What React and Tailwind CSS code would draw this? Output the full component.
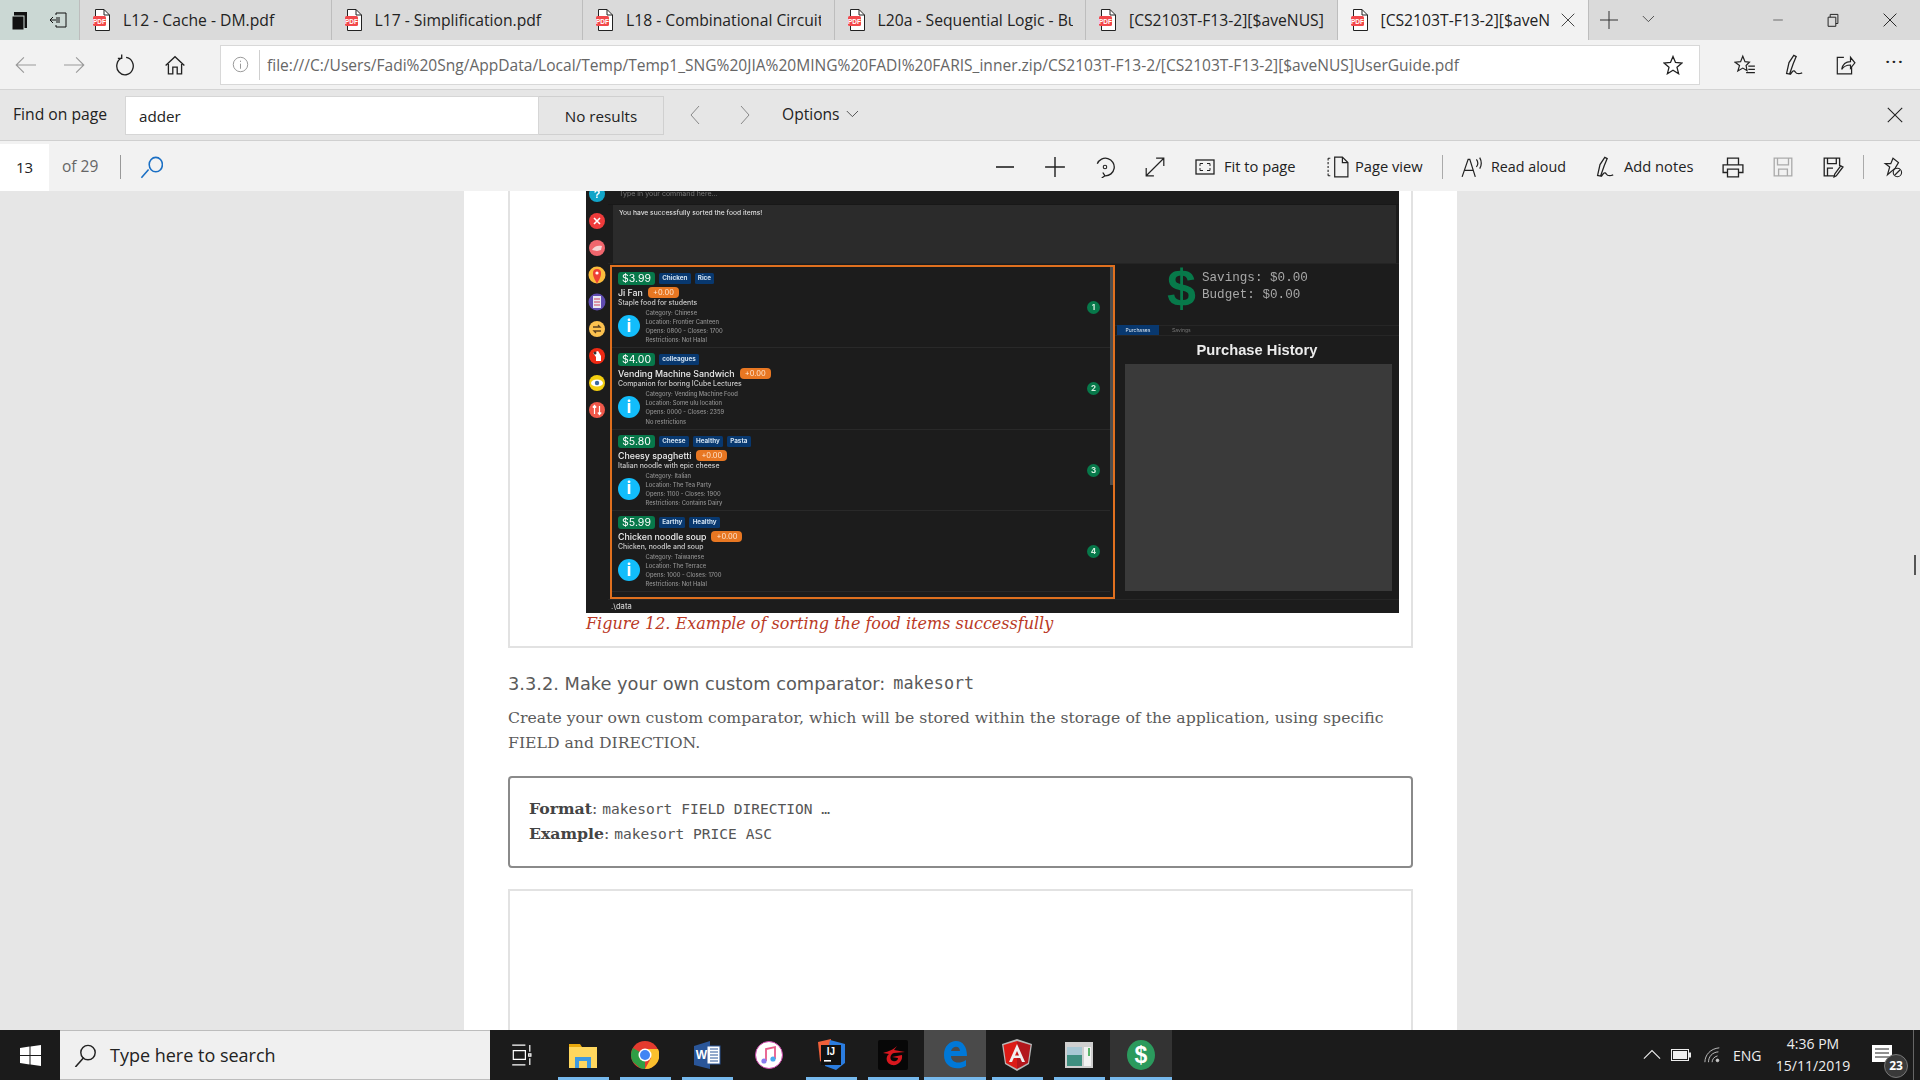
import React from "react";

const Ic = ({ s = 20, children, className = "", sw = 1 }) => (
  <svg width={s} height={s} viewBox="0 0 20 20" fill="none" stroke="currentColor" strokeWidth={sw} className={className}>{children}</svg>
);

const PdfIcon = () => (
  <svg width="18" height="22" viewBox="0 0 18 22" className="shrink-0">
    <path d="M2.5 .5H11L16.5 6V21.5H2.5Z" fill="#fff" stroke="#222" />
    <path d="M11 .5V6H16.5" fill="none" stroke="#222" />
    <rect x="0" y="7" width="13" height="10" rx="1.5" fill="#f2484b" />
    <text x="6.5" y="14.5" fontSize="6.5" fontWeight="700" fill="#fff" textAnchor="middle" fontFamily="Liberation Sans">PDF</text>
  </svg>
);

const Tab = ({ title, active }) => (
  <div className={`w-[251.5px] h-10 flex items-center pl-[13px] border-r border-[#bdbdbd] shrink-0 ${active ? "bg-[#f2f2f2]" : ""}`}>
    <PdfIcon />
    <div className={`ml-[12px] overflow-hidden whitespace-nowrap text-[15.7px] text-[#222] pt-[1px] ${active ? "w-[170px]" : "w-[195px]"}`}>{title}</div>
    {active && <Ic s={18} className="ml-[8px] text-[#333]"><path d="M3 3L17 17M17 3L3 17" /></Ic>}
  </div>
);

const Btn = ({ children, className = "" }) => (
  <div className={`w-[50px] h-full flex items-center justify-center shrink-0 ${className}`}>{children}</div>
);

const Pen = () => (
  <Ic s={24}><path d="M3 17L5 8 9 2 11 3 8.5 9 5.5 17.5ZM6 18C8 15 9 14 10 15.500S12 18 16 16.500" strokeWidth="1.05" /></Ic>
);

const SideIcons = () => (
  <div className="w-[22px] shrink-0 flex flex-col items-center gap-[11px] mt-[-5px]">
    <svg width="16" height="16" viewBox="0 0 16 16"><circle cx="8" cy="8" r="8" fill="#12a5c9" /><text x="8" y="12" fontSize="11" fontWeight="700" fill="#fff" textAnchor="middle" fontFamily="Liberation Sans">?</text></svg>
    <svg width="16" height="16" viewBox="0 0 16 16"><circle cx="8" cy="8" r="8" fill="#ee3b3b" /><path d="M5 5L11 11M11 5L5 11" stroke="#fff" strokeWidth="1.6" /></svg>
    <svg width="16" height="16" viewBox="0 0 16 16"><circle cx="8" cy="8" r="8" fill="#f0666d" /><path d="M3 10C5 6 9 5 13 6L12 10 8 11Z" fill="#f5d5d5" /></svg>
    <svg width="16" height="16" viewBox="0 0 16 16" className="overflow-visible"><circle cx="8" cy="8" r="8.500" fill="#fcbc3c" /><path d="M8 16.500C4 10 4 8 4 6a4 4 0 018 0c0 2 0 4-4 10.500Z" fill="#ee4035" /><circle cx="8" cy="6" r="1.6" fill="#fff" /></svg>
    <svg width="16" height="16" viewBox="0 0 16 16" className="overflow-visible"><circle cx="8" cy="8" r="8.500" fill="#5f4bb0" /><rect x="4" y="2" width="8" height="12" fill="#e8e8f4" /><path d="M5 5H11M5 8H11M5 11H11" stroke="#d0415a" /></svg>
    <svg width="16" height="16" viewBox="0 0 16 16"><circle cx="8" cy="8" r="8" fill="#fcc24f" /><path d="M4 6H11L9 4M12 10H5L7 12" stroke="#5a4020" strokeWidth="1.3" fill="none" /></svg>
    <svg width="16" height="16" viewBox="0 0 16 16"><circle cx="8" cy="8" r="8" fill="#ee2a14" /><path d="M4 5L9 3 12 8 12 13 7 13 7 9Z" fill="#fff" /><circle cx="6" cy="5" r="1.5" fill="#333" /></svg>
    <svg width="16" height="16" viewBox="0 0 16 16"><circle cx="8" cy="8" r="8" fill="#f4cf10" /><ellipse cx="8" cy="8" rx="6" ry="3.6" fill="#fff" /><circle cx="8" cy="8" r="2.2" fill="#3c6aa0" /></svg>
    <svg width="16" height="16" viewBox="0 0 16 16"><circle cx="8" cy="8" r="8" fill="#f0584a" /><path d="M5.5 3.500V12M3.800 5.500L5.500 3.500 7.200 5.500M10.500 12.500V4M8.800 10.500L10.500 12.500 12.200 10.500" stroke="#fff" strokeWidth="1.2" fill="none" /></svg>
  </div>
);

const Food = ({ price, tags, name, details, n }) => (
  <div className="h-[81.4px] border-b border-[#292929] pl-[6px] pr-[10px] pt-[5px] flex items-center justify-between">
    <div className="self-start">
      <div className="flex items-center gap-[4px] h-[13px]">
        <div className="w-[37px] h-[13px] rounded-[3px] bg-[#07784a] text-white text-[10.5px] leading-[13px] text-center">{price}</div>
        {tags.map((t) => (
          <div key={t} className="h-[11px] px-[3.2px] rounded-[1.5px] bg-[#08386f] text-[#cfe0f0] text-[6.3px] font-bold leading-[11px]">{t}</div>
        ))}
      </div>
      <div className="mt-[2px] h-[11px] flex items-center gap-[5px]">
        <span className="text-[#ececec] text-[8.8px] leading-[11px] font-medium">{name}</span>
        <span className="w-[31px] h-[11px] rounded-[4px] bg-[#e87722] text-[#ffe6d0] text-[7.5px] leading-[11px] text-center">+0.00</span>
      </div>
      <div className="h-[9px] text-[#c8c8c8] text-[6.9px] leading-[9px] whitespace-nowrap font-medium">{details[0]}</div>
      <div className="flex items-center mt-[1px]">
        <div className="w-[22px] h-[22px] rounded-full bg-[#12bdfb] flex items-center justify-center text-white text-[17px] leading-none font-bold">i</div>
        <div className="ml-[5.5px] text-[#8f8f8f] text-[5.8px] leading-[9.1px] whitespace-nowrap font-medium">
          {details.slice(1).map((d) => <div key={d}>{d}</div>)}
        </div>
      </div>
    </div>
    <div className="w-[13px] h-[13px] -mt-[4px] rounded-full bg-[#07784a] text-[#d8efe0] text-[8px] font-bold leading-[13px] text-center">{n}</div>
  </div>
);

const foods = [
  { price: "$3.99", tags: ["Chicken", "Rice"], name: "Ji Fan", n: 1, details: ["Staple food for students", "Category: Chinese", "Location: Frontier Canteen", "Opens: 0800 - Closes: 1700", "Restrictions: Not Halal"] },
  { price: "$4.00", tags: ["colleagues"], name: "Vending Machine Sandwich", n: 2, details: ["Companion for boring ICube Lectures", "Category: Vending Machine Food", "Location: Some ulu location", "Opens: 0000 - Closes: 2359", "No restrictions"] },
  { price: "$5.80", tags: ["Cheese", "Healthy", "Pasta"], name: "Cheesy spaghetti", n: 3, details: ["Italian noodle with epic cheese", "Category: Italian", "Location: The Tea Party", "Opens: 1100 - Closes: 1900", "Restrictions: Contains Dairy"] },
  { price: "$5.99", tags: ["Earthy", "Healthy"], name: "Chicken noodle soup", n: 4, details: ["Chicken, noodle and soup", "Category: Taiwanese", "Location: The Terrace", "Opens: 1000 - Closes: 1700", "Restrictions: Not Halal"] },
];

const AppShot = () => (
  <div className="ml-[76px] w-[813px] h-[422px] bg-[#1c1c1c] flex overflow-hidden blur-[0.35px] font-['Inter',sans-serif]">
    <SideIcons />
    <div className="flex-1 min-w-0 flex flex-col">
      <div className="h-[14px] pl-[11px] text-[#777] text-[7px] leading-[5px] border-b border-[#181818]">Type in your command here...</div>
      <div className="h-[58px] ml-[5px] mr-[3px] bg-[#2b2b2b] pl-[6px] pt-[4px] text-[#ddd] text-[6.7px] leading-[9px] font-medium">You have successfully sorted the food items!</div>
      <div className="h-[1px] bg-[#242424]" />
      <div className="flex h-[335px] mt-[1px]">
        <div className="ml-[2px] w-[505px] h-[334px] border-2 border-[#e0701f] flex">
          <div className="flex-1 min-w-0">
            {foods.map((f) => <Food key={f.n} {...f} />)}
          </div>
          <div className="w-[3px] shrink-0"><div className="h-[218px] bg-[#4d4d4d]" /></div>
        </div>
        <div className="flex-1 min-w-0 flex flex-col">
          <div className="h-[60px] pl-[52px] flex items-start">
            <div className="text-[#07794a] text-[52px] leading-[48px] font-bold font-['Liberation_Sans',sans-serif] -mt-[1px] w-[35px]">$</div>
            <div className="font-['Liberation_Mono',monospace] text-[12.6px] leading-[17px] text-[#a8a8a8] pt-[5px] whitespace-nowrap">
              <div>Savings: $0.00</div>
              <div>Budget: $0.00</div>
            </div>
          </div>
          <div className="h-[11px] flex items-center border-y border-[#262626] pl-[2px]">
            <div className="w-[42px] h-[10px] bg-[#08386f] text-[#d8e4f0] text-[5px] leading-[10px] text-center">Purchases</div>
            <div className="ml-[13px] text-[#777] text-[5px]">Savings</div>
          </div>
          <div className="h-[28px] flex items-center justify-center text-[#ececec] text-[14.7px] font-bold font-['Liberation_Sans',sans-serif]">Purchase History</div>
          <div className="ml-[10px] mr-[7px] h-[227px] bg-[#3a3a3a]" />
        </div>
      </div>
      <div className="border-t border-[#262626] pl-[3px] text-[#ccc] text-[7.5px] leading-[13px] font-medium">.\data</div>
    </div>
  </div>
);

const Slot = ({ children, u, active, full }) => (
  <div className={`relative w-[62px] h-full flex items-center justify-center shrink-0 ${active === 1 ? "bg-[#4a4a4a]" : active === 2 ? "bg-[#333333]" : ""}`}>
    {children}
    {u && <div className={`absolute bottom-0 h-[3px] bg-[#76b9ed] ${full ? "left-0 right-0" : "left-[6px] right-[5px]"}`} />}
  </div>
);

export default function App() {
  return (
    <div className="w-[1920px] h-[1080px] overflow-hidden flex flex-col bg-[#e6e6e6] text-[#222] font-['Open_Sans',sans-serif]">
      {/* tab strip */}
      <div className="h-10 flex items-center bg-[#dadada] shrink-0">
        <div className="w-[80px] h-10 flex items-center bg-[#cbd8d4] border-r border-[#bdbdbd] shrink-0 text-[#111]">
          <svg width="18" height="22" viewBox="0 0 18 22" className="ml-[11px]"><rect x="3" y="3" width="13" height="16" fill="#111" /><rect x="1" y="7" width="12" height="14" fill="#111" stroke="#cbd8d4" /></svg>
          <Ic s={20} className="ml-[20px]"><path d="M7 5V3H17V17H7V15M1 10H11M4 7L1 10 4 13M7 8H11M7 12H11" /></Ic>
        </div>
        <Tab title="L12 - Cache - DM.pdf" />
        <Tab title="L17 - Simplification.pdf" />
        <Tab title="L18 - Combinational Circuit" />
        <Tab title="L20a - Sequential Logic - Bu" />
        <Tab title="[CS2103T-F13-2][$aveNUS]I" />
        <Tab title="[CS2103T-F13-2][$aveN" active />
        <Ic s={20} className="ml-[10px] text-[#333]"><path d="M10 1V19M1 10H19" /></Ic>
        <Ic s={16} className="ml-[23px] text-[#333]"><path d="M1 5L8 12 15 5" /></Ic>
        <div className="flex-1" />
        <Ic s={12} className="mr-[42px] text-[#222]"><path d="M2 10H18" /></Ic>
        <Ic s={14} className="mr-[42px] text-[#222]"><path d="M3 6H14V19H3ZM6 6V2H17V15H14" strokeWidth="1.4" /></Ic>
        <Ic s={16} className="mr-[22px] text-[#222]"><path d="M2 2L18 18M18 2L2 18" strokeWidth="1.2" /></Ic>
      </div>
      {/* address bar */}
      <div className="h-[50px] bg-[#f2f2f2] border-b border-[#d4d4d4] flex items-center shrink-0 box-border">
        <Btn className="text-[#999]"><Ic s={22}><path d="M20 10H2M9 3L2 10 9 17" /></Ic></Btn>
        <Btn className="text-[#999]"><Ic s={22}><path d="M0 10H18M11 3L18 10 11 17" /></Ic></Btn>
        <Btn className="text-[#222]"><Ic s={22}><path d="M11 3A7.500 8 0 117 3.600M7 0.500V4H3.500" strokeWidth="1.2" /></Ic></Btn>
        <Btn className="text-[#222]"><Ic s={22}><path d="M1.500 10.500L10 2.500 18.500 10.500M4 9V18H8V12H12V18H16V9" strokeWidth="1.2" /></Ic></Btn>
        <div className="ml-[20px] w-[1480px] h-[40px] bg-white border border-[#d8d8d8] flex items-center shrink-0">
          <div className="w-[39px] h-[30px] flex items-center justify-center border-r border-[#cfcfcf] text-[#888]">
            <Ic s={17}><circle cx="10" cy="10" r="8.500" /><path d="M10 9V15M10 5.500V7" /></Ic>
          </div>
          <div className="ml-[7px] w-[1392px] overflow-hidden whitespace-nowrap text-[15.55px] text-[#666] pt-[2px]">file:///C:/Users/Fadi%20Sng/AppData/Local/Temp/Temp1_SNG%20JIA%20MING%20FADI%20FARIS_inner.zip/CS2103T-F13-2/[CS2103T-F13-2][$aveNUS]UserGuide.pdf</div>
          <Ic s={20} className="ml-[4px] text-[#222]"><path d="M10 1.500L12.500 7.500 19 8 14 12.300 15.600 18.700 10 15.200 4.400 18.700 6 12.300 1 8 7.500 7.500Z" strokeWidth="1.3" /></Ic>
        </div>
        <div className="w-[20px]" />
        <Btn className="text-[#222]"><Ic s={22}><path d="M8 2L10 7 14 7.500 11 10.500 11.800 15 8 12.800 3.500 15.500 5 10.500 1 7.500 6 7Z M13 11H19M13 14H19M11 17H19" strokeWidth="1.1" /></Ic></Btn>
        <Btn className="text-[#222]"><Pen /></Btn>
        <Btn className="text-[#222]"><Ic s={22}><path d="M9 3H3V18H16V12M7 14C8 9 11 7 15 7V3L19 8 15 13V10C12 10 9 11 7 14Z" strokeWidth="1.1" /></Ic></Btn>
        <Btn className="text-[#222] text-[15px] tracking-[2px] font-bold pb-[6px]">···</Btn>
      </div>
      {/* find bar */}
      <div className="h-[51px] bg-[#e6e6e6] border-b border-[#d0d0d0] flex items-center shrink-0">
        <div className="w-[125px] pl-[13px] text-[15.7px] text-[#222] shrink-0 whitespace-nowrap">Find on page</div>
        <div className="w-[414px] h-[39px] bg-white border border-[#d6d6d6] pl-[13px] pt-[2px] flex items-center text-[15.2px] shrink-0">adder</div>
        <div className="w-[125px] h-[39px] bg-[#e6e6e6] border border-l-0 border-[#d0d0d0] pt-[2px] flex items-center justify-center text-[15.2px] shrink-0">No results</div>
        <div className="w-[6px]" />
        <Btn className="text-[#888]"><Ic s={20}><path d="M14 1L6 10 14 19" /></Ic></Btn>
        <Btn className="text-[#888]"><Ic s={20}><path d="M6 1L14 10 6 19" /></Ic></Btn>
        <div className="ml-[12px] text-[15.6px] shrink-0 -mt-[1px]">Options</div>
        <Ic s={16} className="ml-[6px] text-[#333]"><path d="M1 5L8 12 15 5" /></Ic>
        <div className="flex-1" />
        <Btn className="text-[#222]"><Ic s={18}><path d="M2 2L18 18M18 2L2 18" strokeWidth="1.2" /></Ic></Btn>
      </div>
      {/* pdf toolbar */}
      <div className="h-[50px] bg-[#f2f2f2] flex items-center shrink-0 text-[14.7px] pt-[1px]">
        <div className="w-[49px] h-[47px] mt-[2px] bg-white flex items-center justify-center text-[15px] shrink-0">13</div>
        <div className="ml-[13px] text-[15.5px] text-[#666] whitespace-nowrap shrink-0 w-[44px]">of 29</div>
        <div className="ml-[14px] w-px h-[24px] bg-[#999] shrink-0" />
        <Ic s={24} className="ml-[18px] text-[#1a6fc4] shrink-0"><path d="M2 19L8 12M14 2a5.500 6 0 100 12 5.500 6 0 000-12Z" strokeWidth="1.3" /></Ic>
        <div className="w-[817px] shrink-0" />
        <Btn className="text-[#222]"><Ic s={20}><path d="M1 10H19" strokeWidth="1.6" /></Ic></Btn>
        <Btn className="text-[#222]"><Ic s={22}><path d="M10 1V19M1 10H19" strokeWidth="1.3" /></Ic></Btn>
        <Btn className="text-[#222]"><Ic s={22}><path d="M3 7A8 8 0 1110 18M10 18L8 15M10 18L7 20" strokeWidth="1.2" /><circle cx="10" cy="10" r="1.600" /></Ic></Btn>
        <Btn className="text-[#222]"><Ic s={22}><path d="M2 18L18 2M11 2H18V9M2 11V18H9" strokeWidth="1.1" /></Ic></Btn>
        <Ic s={20} className="ml-[15px] shrink-0"><rect x="1" y="3" width="18" height="14" strokeWidth="1.3" /><path d="M5 9V6.500H8M12 6.500H15V9M15 11V13.500H12M8 13.500H5V11" /></Ic>
        <div className="ml-[9px] w-[72px] shrink-0 whitespace-nowrap">Fit to page</div>
        <Ic s={22} className="ml-[31px] shrink-0"><path d="M1 2V18M1 2H4M1 18H4" strokeDasharray="2 1.500" /><path d="M7 1H14L19 6V19H7ZM14 1V6H19" strokeWidth="1.1" /></Ic>
        <div className="ml-[6px] w-[66px] shrink-0 whitespace-nowrap">Page view</div>
        <div className="ml-[21px] w-px h-[24px] bg-[#aaa] shrink-0" />
        <Ic s={22} className="ml-[18px] shrink-0"><path d="M1 19L6.500 3H8L13 19M3.500 13H11M14 3C15.500 5 15.500 8 14 10M17 1.500C19 5 19 8 17 11.500" strokeWidth="1.1" /></Ic>
        <div className="ml-[8px] w-[74px] shrink-0 whitespace-nowrap text-[14.3px]">Read aloud</div>
        <div className="ml-[29px] shrink-0"><Pen /></div>
        <div className="ml-[6px] w-[68px] shrink-0 whitespace-nowrap">Add notes</div>
        <div className="ml-[16px]" />
        <Btn className="text-[#222]"><Ic s={22}><path d="M5 8V2H15V8M5 15H1V8H19V15H15M5 12H15V19H5Z" strokeWidth="1.2" /></Ic></Btn>
        <Btn className="text-[#aaa]"><Ic s={22}><path d="M2 2H18V18H2ZM5 2V8H15V2M6 18V12H14V18" strokeWidth="1.2" /></Ic></Btn>
        <Btn className="text-[#222]"><Ic s={22}><path d="M11 18H2V2H16V9M5 2V7H13V2M5 18V11H10M19 10L13 18 11 19 11.500 16.500 17 9Z" strokeWidth="1.2" /></Ic></Btn>
        <div className="ml-[5px] w-px h-[24px] bg-[#aaa] shrink-0" />
        <Btn className="text-[#222] ml-[4px]"><Ic s={22}><path d="M10 2L15 6 12 11 5 17 7 10 3 7 8 7Z" strokeWidth="1.1" /><circle cx="14" cy="15" r="3.800" /><path d="M11.500 17.500L16.500 12.500" /></Ic></Btn>
      </div>
      {/* document */}
      <div className="h-[839px] relative shrink-0 bg-[#e6e6e6] overflow-hidden">
        <div className="ml-[464px] w-[993px] h-full bg-white px-[44px] overflow-hidden">
          <div className="h-[457px] border-x-2 border-b-2 border-[#e2e2e2]">
            <AppShot />
            <div className="ml-[76px] mt-[1px] text-[16px] leading-[20px] italic text-[#ba3925] whitespace-nowrap font-['DejaVu_Serif',serif]">Figure 12. Example of sorting the food items successfully</div>
          </div>
          <div className="mt-[24px] h-[24px] flex items-center text-[#5a5a5a] text-[17.8px] whitespace-nowrap font-['DejaVu_Sans',sans-serif]">
            3.3.2. Make your own custom comparator:<span className="ml-[8px] text-[16.8px] font-['DejaVu_Sans_Mono',monospace]">makesort</span>
          </div>
          <div className="mt-[10px] text-[#5a5a5a] text-[15.7px] leading-[24.5px] font-['DejaVu_Serif',serif]">
            <div className="whitespace-nowrap">Create your own custom comparator, which will be stored within the storage of the application, using specific</div>
            <div>FIELD and DIRECTION.</div>
          </div>
          <div className="mt-[21px] h-[92px] border-2 border-[#8a8a8a] rounded-[4px] pl-[19px] pt-[19px] text-[15.7px] leading-[24.5px] text-[#555] font-['DejaVu_Serif',serif]">
            <div><b className="text-[#444]">Format</b>: <span className="font-['DejaVu_Sans_Mono',monospace] text-[14.55px]">makesort FIELD DIRECTION …</span></div>
            <div><b className="text-[#444]">Example</b>: <span className="font-['DejaVu_Sans_Mono',monospace] text-[14.55px]">makesort PRICE ASC</span></div>
          </div>
          <div className="mt-[21px] h-[200px] border-x-2 border-t-2 border-[#e2e2e2]" />
        </div>
        <div className="absolute left-[1914px] top-[364px] w-[2px] h-[20px] bg-[#555]" />
      </div>
      {/* taskbar */}
      <div className="h-[50px] bg-[#1b1b1b] flex items-center shrink-0 text-white">
        <div className="w-[60px] h-full flex items-center justify-center shrink-0">
          <svg width="21" height="21" viewBox="0 0 21 21" fill="#fff"><path d="M0 3L9.500 1.600V10H0ZM10.500 1.500L21 0V10H10.500ZM0 11H9.500V19.400L0 18ZM10.500 11H21V21L10.500 19.500Z" /></svg>
        </div>
        <div className="w-[430px] h-full bg-[#f0f0f0] border-y border-[#bdbdbd] flex items-center shrink-0 text-[#222]">
          <Ic s={24} className="ml-[13px]"><path d="M2 20L9 12" strokeWidth="1.3" /><circle cx="12.500" cy="8" r="6" strokeWidth="1.2" /></Ic>
          <div className="ml-[13px] text-[18px] whitespace-nowrap">Type here to search</div>
        </div>
        <Slot>
          <Ic s={22} className="text-white"><path d="M2 1H14M2 19H14M3 6H14V14H3ZM18 1V7M18 13V19M17 9H19V11H17Z" strokeWidth="1.1" /></Ic>
        </Slot>
        <Slot u>
          <svg width="28" height="28" viewBox="0 0 28 28"><path d="M0 3H11L13 6H28V26H0Z" fill="#e8a80c" /><rect y="6" width="28" height="21" fill="#ffd75e" /><path d="M6 27V16H22V27H18V20H10V27Z" fill="#3f9ae0" /></svg>
        </Slot>
        <Slot u>
          <svg width="28" height="28" viewBox="0 0 28 28"><circle cx="14" cy="14" r="14" fill="#e33b2e" /><path d="M14 14L2 7A14 14 0 002 21L9 27A14 14 0 0014 28Z" fill="#2f9e44" /><path d="M14 8H27A14 14 0 0114 28L20 17Z" fill="#fbc02d" /><circle cx="14" cy="14" r="6.500" fill="#fff" /><circle cx="14" cy="14" r="5" fill="#4285f4" /></svg>
        </Slot>
        <Slot u>
          <svg width="28" height="28" viewBox="0 0 28 28"><path d="M1 5L17 0V28L1 24Z" fill="#2a5699" /><rect x="14" y="5" width="13" height="18" fill="#fff" stroke="#2a5699" /><path d="M17 8H25M17 11H25M17 14H25M17 17H25M17 20H25" stroke="#2a5699" /><text x="8.500" y="18" fontSize="12" fontWeight="700" fill="#fff" textAnchor="middle" fontFamily="Liberation Sans">W</text></svg>
        </Slot>
        <Slot>
          <svg width="28" height="28" viewBox="0 0 28 28"><circle cx="14" cy="14" r="13.500" fill="#fff" stroke="#c4a" /><path d="M11 20V8L20 6V18" stroke="#e85a8a" strokeWidth="1.8" fill="none" /><circle cx="9" cy="20" r="2.600" fill="#8a7cf0" /><circle cx="18" cy="18" r="2.600" fill="#4aa8ee" /></svg>
        </Slot>
        <Slot u>
          <svg width="30" height="32" viewBox="0 0 30 32"><path d="M2 3L15 0 13 28 4 22Z" fill="#f0603a" /><path d="M14 1L29 5 29 24 20 31 9 27Z" fill="#2b7de0" /><rect x="5" y="6" width="20" height="20" fill="#111" /><text x="15" y="16" fontSize="10" fontWeight="700" fill="#fff" textAnchor="middle" fontFamily="Liberation Sans">IJ</text><rect x="8" y="21" width="7" height="1.600" fill="#fff" /></svg>
        </Slot>
        <Slot u>
          <svg width="30" height="30" viewBox="0 0 30 30"><rect width="30" height="30" rx="2" fill="#070707" /><path d="M5 13C11 11 15 10 19 6L16 10 27 12 16 13C12 14 11 20 15 21 18 22 20 20 20 18L14 17 24 15C25 21 20 26 14 25 8 24 7 17 11 14Z" fill="#d8171e" /></svg>
        </Slot>
        <Slot u full active={1}>
          <svg width="24" height="28" viewBox="0 0 24 28"><path d="M1 14C1 5 7 0 13 0 20 0 24 6 24 15H8C8 21 15 24 23 19V25C14 30 1 27 1 14ZM8 10H17C17 5 10 4 8 10Z" fill="#0078d7" /></svg>
        </Slot>
        <Slot u>
          <svg width="30" height="32" viewBox="0 0 30 32"><path d="M15 0L30 5 27 25 15 32 3 25 0 5Z" fill="#b8b8b8" /><path d="M15 2V30L26 24 28.500 6Z" fill="#b3161c" /><path d="M15 2L1.500 6 4 24 15 30Z" fill="#dd1b16" /><path d="M15 5L7 23H10L11.800 19H18.200L20 23H23ZM13 16.500L15 12 17 16.500Z" fill="#f0f0f0" /></svg>
        </Slot>
        <Slot u>
          <svg width="28" height="26" viewBox="0 0 28 26"><rect width="28" height="26" fill="#cfcfcf" /><rect x="2" y="5" width="15" height="19" fill="#3f8f80" /><rect x="2" y="5" width="15" height="8" fill="#a8c8d4" /><rect x="19" y="5" width="7" height="19" fill="#f2f2f2" /><rect x="23" y="6" width="2" height="8" fill="#5bb36a" /></svg>
        </Slot>
        <Slot u full active={2}>
          <svg width="28" height="30" viewBox="0 0 28 30"><ellipse cx="14" cy="15" rx="14" ry="15" fill="#2b9a5d" /><text x="14" y="23" fontSize="23" fontWeight="700" fill="#fff" textAnchor="middle" fontFamily="Liberation Sans">$</text></svg>
        </Slot>
        <div className="flex-1 h-full" />
        <Ic s={18} className="mr-[10px] text-[#eee] shrink-0"><path d="M1 14L10 5 19 14" strokeWidth="1.2" /></Ic>
        <svg width="20" height="12" viewBox="0 0 20 12" className="mr-[13px] shrink-0"><rect x=".5" y=".5" width="17" height="11" fill="none" stroke="#eee" /><rect x="2" y="2" width="14" height="8" fill="#eee" /><rect x="18" y="3.500" width="2" height="5" fill="#eee" /></svg>
        <Ic s={18} className="mr-[11px] text-[#ccc] shrink-0"><path d="M1 18C1 10 7 3 17 2M5 18C5 12 9 7 16 6.500M9 18C9 15 11 12 15 11" /><circle cx="15" cy="16" r="1.500" fill="currentColor" /></Ic>
        <div className="w-[35px] text-[14px] text-[#eee] shrink-0 whitespace-nowrap">ENG</div>
        <div className="w-[90px] text-[14px] leading-[22px] text-center text-[#eee] shrink-0 whitespace-nowrap">
          <div>4:36 PM</div>
          <div>15/11/2019</div>
        </div>
        <div className="relative w-[48px] h-full shrink-0">
          <svg width="20" height="18" viewBox="0 0 20 18" className="absolute left-[14px] top-[15px]"><rect width="20" height="17" fill="#fff" /><path d="M3 4H17M3 8H17M3 12H17" stroke="#222" /></svg>
          <div className="absolute left-[26px] top-[24px] w-[24px] h-[24px] rounded-full bg-[#3a3a3a] border border-[#777] text-[12px] font-bold text-center leading-[22px]">23</div>
        </div>
        <div className="ml-[7px] w-[1px] h-full bg-[#666] mr-[6px] shrink-0" />
      </div>
    </div>
  );
}
